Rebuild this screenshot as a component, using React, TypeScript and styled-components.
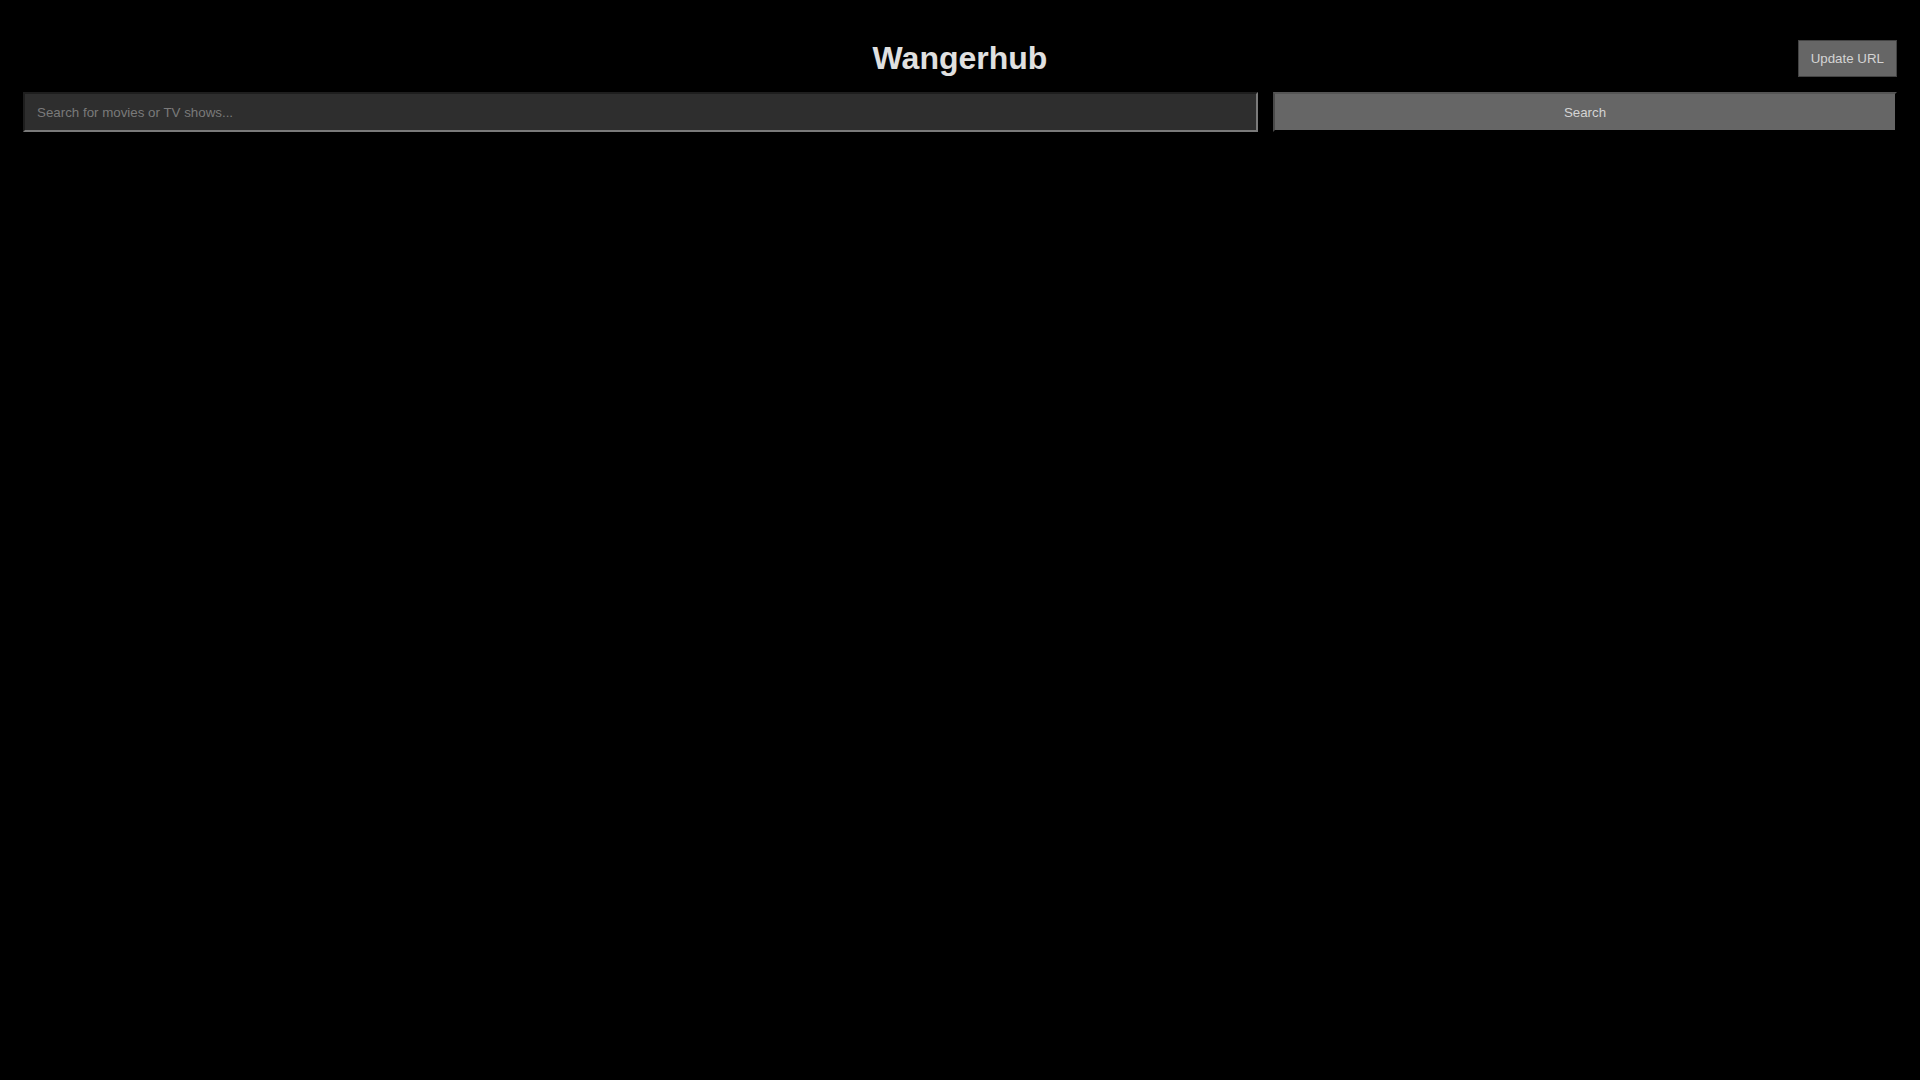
import React from "react";
import styled, { createGlobalStyle } from "styled-components";

const GlobalStyle = createGlobalStyle`
  html, body {
    margin: 0;
    background: #000;
    color: #e0e0e0;
    font-family: "Liberation Sans", Arial, sans-serif;
  }
`;

const Page = styled.div`
  min-height: 100vh;
  padding: 40px 23px 0;
  box-sizing: border-box;
  background: #000;
`;

const Header = styled.header`
  display: grid;
  grid-template-columns: 1fr auto 1fr;
  align-items: center;
  height: 37px;
`;

const Title = styled.h1`
  grid-column: 2;
  margin: 0;
  font-size: 32px;
  font-weight: 700;
  line-height: 37px;
  color: #e0e0e0;
`;

const UpdateButton = styled.button`
  grid-column: 3;
  justify-self: end;
  height: 37px;
  padding: 0 12px;
  background: #666;
  color: #d4d4d4;
  border: 1px solid #444;
  font-family: "Liberation Sans", Arial, sans-serif;
  font-size: 13.333px;
  cursor: pointer;
`;

const SearchRow = styled.form`
  display: grid;
  grid-template-columns: 1235fr 624fr;
  gap: 15px;
  margin-top: 15px;
`;

const SearchInput = styled.input`
  height: 40px;
  box-sizing: border-box;
  padding: 0 12px;
  background: #2e2e2e;
  color: #e0e0e0;
  border-width: 2px;
  border-style: solid;
  border-color: #1e1e1e #7a7a7a #7a7a7a #1e1e1e;
  font-family: "Liberation Sans", Arial, sans-serif;
  font-size: 13.333px;
  outline: none;

  &::placeholder {
    color: #7a7a7a;
  }
`;

const SearchButton = styled.button`
  height: 40px;
  box-sizing: border-box;
  background: #666;
  color: #d4d4d4;
  border-width: 2px;
  border-style: solid;
  border-color: #555 #000 #000 #4a4a4a;
  font-family: "Liberation Sans", Arial, sans-serif;
  font-size: 13.333px;
  cursor: pointer;
`;

const App = () => {
  return (
    <Page>
      <GlobalStyle />
      <Header>
        <Title>Wangerhub</Title>
        <UpdateButton type="button">Update URL</UpdateButton>
      </Header>
      <SearchRow onSubmit={(e) => e.preventDefault()}>
        <SearchInput type="text" placeholder="Search for movies or TV shows..." />
        <SearchButton type="submit">Search</SearchButton>
      </SearchRow>
    </Page>
  );
};

export default App;
